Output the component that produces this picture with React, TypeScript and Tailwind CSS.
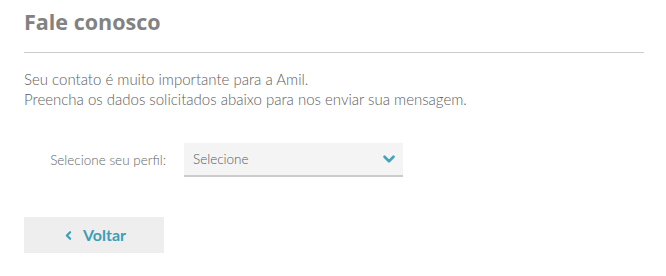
import { ChevronDown, ChevronLeft } from 'lucide-react';

export default function App() {
  return (
    <div className="w-[666px] h-[276px] bg-white px-6 pt-[7px] font-['Lato',sans-serif]">
      <h1 className="font-['Open_Sans',sans-serif] text-[21.5px] leading-[30px] font-bold text-[#828282]">
        Fale conosco
      </h1>
      <hr className="mt-[15px] w-[620px] border-0 border-t border-[#cccccc]" />

      <div className="mt-[16px] text-[15px] leading-[20px] font-light text-[#606060]">
        <p>Seu contato é muito importante para a Amil.</p>
        <p>Preencha os dados solicitados abaixo para nos enviar sua mensagem.</p>
      </div>

      {/* Perfil */}
      <div className="mt-[34px] flex items-center">
        <label className="w-[160px] pr-[18px] text-right text-[13.5px] font-light text-[#666666]">
          Selecione seu perfil:
        </label>
        <div className="w-[219px] h-[34px] flex items-center justify-between pl-[9px] pr-[5px] bg-[#f4f4f4] border-b-2 border-[#cccccc]">
          <span className="text-[13.5px] font-light text-[#5a5a5a]">Selecione</span>
          <ChevronDown size={18} strokeWidth={3.5} className="text-[#45a3b9]" />
        </div>
      </div>

      <button className="mt-[40px] w-[140px] h-[36px] flex items-center justify-center gap-[8px] bg-[#eeeeee] text-[#3d9db3] text-[16px] font-bold">
        <ChevronLeft size={13} strokeWidth={4} />
        <span>Voltar</span>
      </button>
    </div>
  );
}
